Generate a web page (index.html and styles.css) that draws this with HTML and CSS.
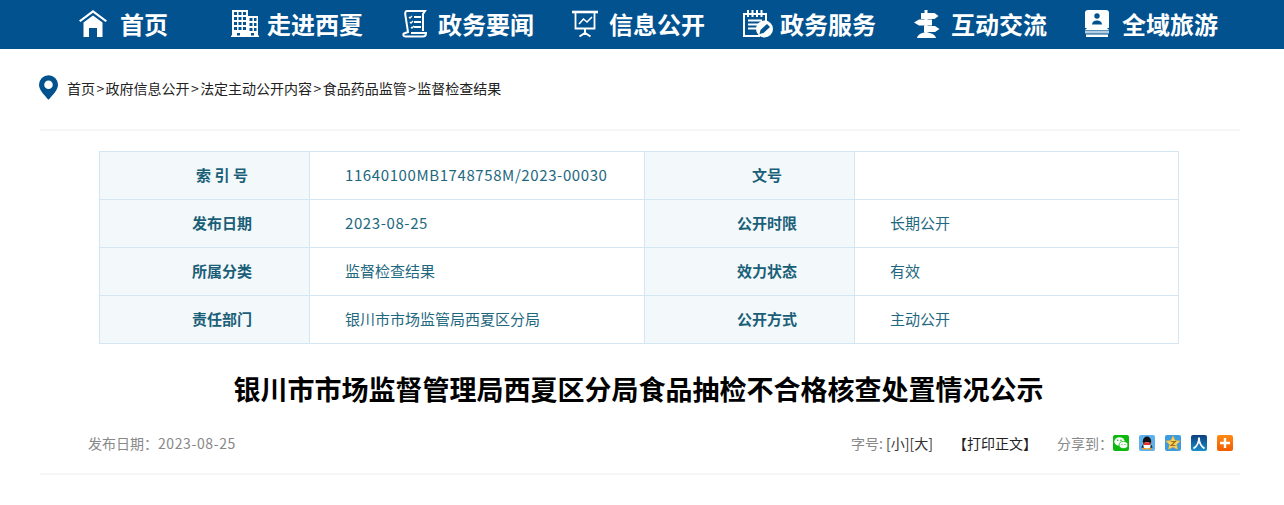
FILE: index.html
```html
<!DOCTYPE html>
<html lang="zh-CN">
<head>
<meta charset="utf-8">
<title>银川市市场监督管理局西夏区分局食品抽检不合格核查处置情况公示</title>
<link rel="stylesheet" href="styles.css">
</head>
<body>
<nav class="nav">
  <a class="nav-item nav-first">
    <span class="nav-box">
      <svg width="28" height="28" viewBox="0 0 28 28"><path d="M0 10.500 14 0l14 10.500-1.500 1.500L14 2.800 1.500 12z" fill="#fff"/><path d="M4.500 12.500 14 5.500l9.500 7V27H18V18h-8v9H4.500z" fill="#fff"/></svg>
    </span>
    <span>首页</span>
  </a>
  <a class="nav-item">
    <span class="nav-box nudge-r">
      <svg width="28" height="28" viewBox="0 0 28 28"><path d="M1 0h16v6h10v20H1z" fill="#fff"/><path d="M0 25.500h28V27H0z" fill="#fff"/><g fill="#02528f"><path d="M3 2h3v3H3zM7.500 2h3v3h-3zM12 2h3v3h-3zM3 7h3v3H3zM7.500 7h3v3h-3zM12 7h3v3h-3zM3 12h3v3H3zM7.500 12h3v3h-3zM12 12h3v3h-3zM3 17h3v3H3zM7.500 17h3v3h-3zM12 17h3v3h-3zM18.500 8h3v3h-3zM23 8h2.500v3H23zM18.500 13h3v3h-3zM23 13h2.500v3H23zM18.500 18h3v3h-3zM23 18h2.500v3H23zM6 23h3v2.500H6zM20 23h3v2.500h-3z"/></g></svg>
    </span>
    <span>走进西夏</span>
  </a>
  <a class="nav-item">
    <span class="nav-box nudge-l">
      <svg width="26" height="28" viewBox="0 0 26 28" fill="none" stroke="#fff"><path d="M5 1h18l-2 3v17" stroke-width="2"/><path d="M5 1C3 1 3 3 3.500 6L6 22l-4 1.500C1 24 1 26.500 3.500 26.500H21c2 0 3-1 3-3.500H9" stroke-width="2"/><path d="M12 7h7M12 12h7M12 17h7" stroke-width="2"/><path d="m7 7 1 1 2-2M8 12l1 1 2-2M9 17l1 1 2-2" stroke-width="1.300"/></svg>
    </span>
    <span>政务要闻</span>
  </a>
  <a class="nav-item">
    <span class="nav-box">
      <svg width="26" height="28" viewBox="0 0 26 28" fill="none" stroke="#fff"><path d="M0 2h26" stroke-width="2.600"/><path d="M3.500 3v15.500h19V3" stroke-width="1.800"/><path d="m7 14 4.500-5 3.500 3 5-5" stroke-width="1.600"/><path d="M13 19v6" stroke-width="2"/><path d="m7.500 26.500 5.500-3.500 5.500 3.500" stroke-width="2"/></svg>
    </span>
    <span>信息公开</span>
  </a>
  <a class="nav-item">
    <span class="nav-box">
      <svg width="30" height="28" viewBox="0 0 30 28" fill="none"><path d="M17 26H1V4h22v8" stroke="#fff" stroke-width="2"/><path d="M5 0v7M9.500 0v7M14 0v7M18.500 0v7" stroke="#fff" stroke-width="2"/><path d="M5 10.500h14M5 14.500h11M5 18.500h9" stroke="#fff" stroke-width="2"/><circle cx="21.500" cy="19" r="8.500" fill="#fff"/><path d="m16.500 24 1-4 6.500-6 3 3-6.500 6z" fill="#02528f"/></svg>
    </span>
    <span>政务服务</span>
  </a>
  <a class="nav-item">
    <span class="nav-box">
      <svg width="26" height="28" viewBox="0 0 26 28" fill="#fff"><path d="M10.500 0h3v26h-3z"/><path d="M7 3h13.500l4 3-4 3H7zM18 9.500H5l-5 3 5 3h13zM10 16h11l4.500 3-4.500 3H10z"/><path d="M3 28c1-4 5-5.500 9-5.500s9 1.500 10 5.500z"/></svg>
    </span>
    <span>互动交流</span>
  </a>
  <a class="nav-item">
    <span class="nav-box">
      <svg width="24" height="28" viewBox="0 0 24 28"><path d="M3 0h18a3 3 0 0 1 3 3v15H0V3a3 3 0 0 1 3-3z" fill="#fff"/><circle cx="12" cy="6" r="2.700" fill="#02528f"/><path d="M7 14.500c0-5.500 10-5.500 10 0z" fill="#02528f"/><path d="M3 17h18l3 3H0z" fill="#fff"/><path d="M0 20.500h24v3H0z" fill="#b4cde0"/><path d="M1 24.500h22V27H1z" fill="#fff"/></svg>
    </span>
    <span>全域旅游</span>
  </a>
</nav>

<main class="page">
  <div class="crumb">
    <svg class="pin" viewBox="0 0 20 26"><path fill-rule="evenodd" d="M10 0a10 10 0 0 1 10 10c0 6-6 11-10 16C6 21 0 16 0 10A10 10 0 0 1 10 0zm0 5.500a4.500 4.500 0 1 0 0 9 4.500 4.500 0 0 0 0-9z" fill="#02528f"/></svg>
    <span class="trail">首页<b>&gt;</b>政府信息公开<b>&gt;</b>法定主动公开内容<b>&gt;</b>食品药品监管<b>&gt;</b>监督检查结果</span>
  </div>

  <div class="info">
    <div class="cell key">索 引 号</div><div class="cell val"><span class="num">11640100MB1748758M/2023-00030</span></div><div class="cell key">文号</div><div class="cell val"></div>
    <div class="cell key">发布日期</div><div class="cell val"><span class="num">2023-08-25</span></div><div class="cell key">公开时限</div><div class="cell val">长期公开</div>
    <div class="cell key">所属分类</div><div class="cell val">监督检查结果</div><div class="cell key">效力状态</div><div class="cell val">有效</div>
    <div class="cell key">责任部门</div><div class="cell val">银川市市场监管局西夏区分局</div><div class="cell key">公开方式</div><div class="cell val">主动公开</div>
  </div>

  <h1 class="title">银川市市场监督管理局西夏区分局食品抽检不合格核查处置情况公示</h1>

  <div class="meta">
    <span class="date">发布日期：<span class="num">2023-08-25</span></span>
    <div class="tools">
      <span class="size"><i>字号:</i> [小][大]</span>
      <span class="print">【打印正文】</span>
      <span class="share">分享到：</span>
      <span class="icons">
        <svg class="sns" viewBox="0 0 16 16"><rect width="16" height="16" rx="2" fill="#0cb80c"/><ellipse cx="6.500" cy="6.500" rx="5.200" ry="4.300" fill="#fff"/><ellipse cx="10.500" cy="10" rx="4.400" ry="3.500" fill="#fff" stroke="#0cb80c" stroke-width=".8"/><circle cx="4.800" cy="5.300" r=".8" fill="#0cb80c"/><circle cx="8" cy="5.300" r=".8" fill="#0cb80c"/><circle cx="9" cy="9.500" r=".6" fill="#0cb80c"/><circle cx="12" cy="9.500" r=".6" fill="#0cb80c"/></svg>
        <svg class="sns" viewBox="0 0 16 16"><rect width="16" height="16" rx="2" fill="#5db2ee"/><ellipse cx="8" cy="6.500" rx="4.200" ry="5" fill="#111"/><ellipse cx="8" cy="10.500" rx="3.500" ry="3.200" fill="#fff"/><path d="M4 7.500h8L11 10H5z" fill="#e3322b"/><path d="M4.200 9 2.300 12.500l2.200.5zM11.800 9l1.900 3.500-2.200.5z" fill="#222"/><path d="M3.500 13h4v1.500h-4zM8.500 13h4v1.500h-4z" fill="#f59a12"/></svg>
        <svg class="sns" viewBox="0 0 16 16"><rect width="16" height="16" rx="2" fill="#3d9be0"/><path d="m8 .8 2.200 4.600 5 .6-3.600 3.400 1 5L8 12l-4.600 2.400 1-5L.8 6l5-.6z" fill="#fbd35c" stroke="#e5a92b" stroke-width=".5"/><path d="M5.800 6.500h4.400L6.200 10.500h4.300" fill="none" stroke="#9a6f1a" stroke-width="1.200"/></svg>
        <svg class="sns" viewBox="0 0 16 16"><defs><linearGradient id="rr" x1="0" y1="0" x2="0" y2="1"><stop offset="0" stop-color="#0d3f7e"/><stop offset="1" stop-color="#1a8fc9"/></linearGradient></defs><rect width="16" height="16" rx="2" fill="url(#rr)"/><path d="M8 2.500C8 8 6.500 11 2.500 13.500M8 2.500C8 8 9.500 11 13.500 13.500" fill="none" stroke="#fff" stroke-width="1.800"/></svg>
        <svg class="sns" viewBox="0 0 16 16"><defs><linearGradient id="pl" x1="0" y1="0" x2="0" y2="1"><stop offset="0" stop-color="#ff8a14"/><stop offset="1" stop-color="#f25c00"/></linearGradient></defs><rect width="16" height="16" rx="2" fill="url(#pl)"/><path d="M6.800 3h2.400v3.800H13v2.400H9.200V13H6.800V9.200H3V6.800h3.800z" fill="#fff"/></svg>
      </span>
    </div>
  </div>
</main>
</body>
</html>
```
FILE: styles.css
```css
* { box-sizing: border-box; }
html, body { margin: 0; padding: 0; }
body {
  background: #fff;
  font-family: "Noto Sans CJK SC", "Noto Sans", sans-serif;
  font-size: 14px;
  color: #000;
}

.nav {
  height: 49px;
  background: #02528f;
  display: flex;
  align-items: center;
  padding-left: 79px;
  overflow: hidden;
}
.nav-item {
  width: 171px;
  height: 49px;
  padding-bottom: 2px;
  flex: none;
  display: flex;
  align-items: center;
  color: #fff;
  font-size: 24px;
  font-weight: 700;
  line-height: 47px;
  white-space: nowrap;
}
.nav-first { width: 151px; }
.nav-box {
  width: 37px;
  height: 28px;
  flex: none;
  display: flex;
  align-items: flex-start;
  margin-top: 1px;
}
.nav-first .nav-box { width: 41px; }
.nav-box svg { display: block; flex: none; }
.nudge-r svg { margin-left: 1px; }
.nudge-l svg { margin-left: 1px; }

.page { width: 1200px; margin-left: 40px; }

.crumb {
  height: 82px;
  padding-top: 26px;
  display: flex;
  align-items: flex-start;
  gap: 9px;
  border-bottom: 2px solid #f5f6f7;
  font-size: 14px;
  line-height: 26px;
  color: #222;
}
.pin { width: 19px; height: 25px; flex: none; margin-left: -1px; }
.trail b { font-weight: 400; margin: 0 1.400px; }

.info {
  width: 1080px;
  margin: 20px 0 0 59px;
  display: grid;
  grid-template-columns: 210px 335px 210px 324px;
  grid-auto-rows: 48px;
  border-top: 1px solid #d3e6f2;
  border-left: 1px solid #d3e6f2;
}
.cell {
  border-right: 1px solid #d3e6f2;
  border-bottom: 1px solid #d3e6f2;
  display: flex;
  align-items: center;
  padding-bottom: 2px;
  color: #1e6880;
  font-size: 15px;
  line-height: 24px;
}
.key {
  background: #f3f8fb;
  justify-content: center;
  padding-left: 35px;
  font-weight: 700;
  color: #1a5f78;
}
.val { padding-left: 35px; }
.num { letter-spacing: .6px; }

.title {
  margin: 24px 0 0;
  padding-right: 3px;
  font-size: 27px;
  line-height: 42px;
  font-weight: 700;
  text-align: center;
  color: #000;
}

.meta {
  margin-top: 17px;
  height: 48px;
  padding: 6px 7px 0 48px;
  display: flex;
  justify-content: space-between;
  align-items: flex-start;
  border-bottom: 2px solid #f5f6f7;
  line-height: 20px;
}
.date { color: #888; }
.tools { display: flex; align-items: flex-start; color: #333; }
.size i { font-style: normal; color: #888; }
.print { margin-left: 20px; color: #222; }
.share { margin-left: 20px; color: #888; }
.icons { display: flex; gap: 10px; margin-top: 2px; }
.sns { width: 16px; height: 16px; display: block; }
```
